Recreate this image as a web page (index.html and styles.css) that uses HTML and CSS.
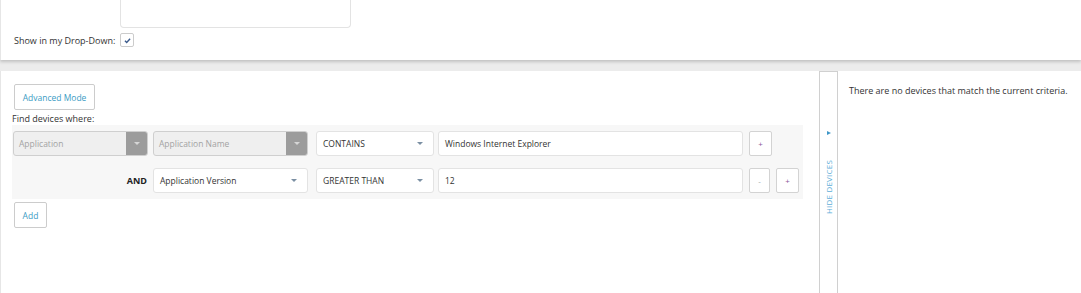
FILE: index.html
```html
<!DOCTYPE html>
<html lang="en">
<head>
    <meta charset="UTF-8">
    <title>Device Filter</title>
    <link rel="stylesheet" href="styles.css">
</head>
<body>
    <div class="top-panel">
        <div class="notes-box"></div>
        <div class="dropdown-row">
            <span class="label">Show in my Drop-Down:</span>
            <span class="checkbox">
                <svg viewBox="0 0 10 10"><path d="M2.2 5.2l1.9 1.9 3.8-4" fill="none" stroke="#3b5b8c" stroke-width="1.6"/></svg>
            </span>
        </div>
    </div>

    <div class="bottom-panel">
        <div class="criteria">
            <button class="btn btn-mode">Advanced Mode</button>
            <div class="find-label">Find devices where:</div>

            <div class="rules">
                <div class="rule">
                    <div class="select disabled col-field"><span>Application</span><i class="arrow"></i></div>
                    <div class="select disabled col-name"><span>Application Name</span><i class="arrow"></i></div>
                    <div class="select col-op"><span>CONTAINS</span><i class="caret"></i></div>
                    <div class="input col-value">Windows Internet Explorer</div>
                    <button class="mini plus">+</button>
                </div>
                <div class="rule">
                    <div class="col-field and">AND</div>
                    <div class="select col-name"><span>Application Version</span><i class="caret"></i></div>
                    <div class="select col-op"><span>GREATER THAN</span><i class="caret"></i></div>
                    <div class="input col-value">12</div>
                    <button class="mini minus">-</button>
                    <button class="mini plus">+</button>
                </div>
            </div>

            <button class="btn btn-add">Add</button>
        </div>

        <div class="toggle">
            <span class="toggle-arrow"></span>
            <span class="toggle-text">HIDE DEVICES</span>
        </div>

        <div class="results">
            There are no devices that match the current criteria.
        </div>
    </div>
</body>
</html>
```

FILE: styles.css
```css
* {
    margin: 0;
    padding: 0;
    box-sizing: border-box;
}

body {
    font-family: "Open Sans", "Liberation Sans", sans-serif;
    font-size: 9px;
    color: #333;
    background: #ececec;
    width: 1081px;
    height: 293px;
    overflow: hidden;
}

/* top panel */
.top-panel {
    background: #fff;
    height: 60px;
    border-left: 1px solid #e6e6e6;
    box-shadow: 0 2px 3px rgba(0, 0, 0, 0.18);
    padding-left: 13px;
}

.notes-box {
    margin-left: 106px;
    width: 231px;
    height: 28px;
    border: 1px solid #e3e3e3;
    border-top: none;
    border-radius: 0 0 4px 4px;
}

.dropdown-row {
    display: flex;
    align-items: center;
    margin-top: 5px;
}

.label {
    width: 106px;
    color: #333;
}

.checkbox {
    width: 14px;
    height: 14px;
    border: 1px solid #ccc;
    border-radius: 2px;
    display: flex;
    align-items: center;
    justify-content: center;
}

.checkbox svg {
    width: 9px;
    height: 9px;
}

/* bottom panel */
.bottom-panel {
    margin-top: 11px;
    background: #fff;
    height: 222px;
    border-left: 1px solid #e6e6e6;
    display: flex;
}

.criteria {
    width: 817px;
    padding: 13px 0 0 11px;
}

.btn {
    font-family: inherit;
    font-size: 8.5px;
    color: #3b9cc4;
    background: #fff;
    border: 1px solid #ccc;
    border-radius: 2px;
    height: 26px;
    cursor: pointer;
}

.btn-mode {
    margin-left: 2px;
    width: 81px;
}

.btn-add {
    margin-left: 2px;
    margin-top: 3px;
    width: 33px;
}

.find-label {
    margin-top: 3px;
    height: 12px;
    line-height: 12px;
    color: #333;
}

.rules {
    width: 791px;
    background: #f7f7f7;
    padding: 6px 0 6px 1px;
    display: flex;
    flex-direction: column;
    gap: 12px;
}

.rule {
    display: flex;
    align-items: center;
    height: 25px;
}

.col-field { width: 135px; }
.col-name { width: 155px; margin-left: 5px; }
.col-op { width: 118px; margin-left: 8px; }
.col-value { width: 305px; margin-left: 4px; }

.select,
.input {
    height: 25px;
    border: 1px solid #e3e3e3;
    border-radius: 3px;
    background: #fff;
    display: flex;
    align-items: center;
    padding-left: 6px;
    color: #333;
    font-size: 8.5px;
}

.select span {
    flex: 1;
}

.select.disabled {
    background: #efefef;
    border-color: #cfcfcf;
    color: #a3a3a3;
    padding-left: 5px;
}

.arrow {
    width: 21px;
    align-self: stretch;
    background: #9c9c9c;
    border-radius: 0 2px 2px 0;
    display: flex;
    align-items: center;
    justify-content: center;
}

.arrow::after,
.caret::after {
    content: "";
    border-left: 3px solid transparent;
    border-right: 3px solid transparent;
    border-top: 3px solid #d6d6d6;
}

.caret {
    width: 12px;
    margin-right: 7px;
    display: flex;
    justify-content: center;
}

.caret::after {
    border-top-color: #7b8fa3;
}

.and {
    text-align: right;
    font-weight: 700;
    color: #222;
    padding-right: 1px;
}

.mini {
    height: 25px;
    width: 23px;
    margin-left: 6px;
    border: 1px solid #d3d3d3;
    border-radius: 2px;
    background: #fff;
    font-family: inherit;
    font-size: 8px;
    cursor: pointer;
}

.mini.plus { color: #8a5a9c; }
.mini.minus { color: #9aa; width: 21px; }

/* side toggle */
.toggle {
    width: 19px;
    border: 1px solid #d0d0d0;
    border-bottom: none;
    display: flex;
    flex-direction: column;
    align-items: center;
    padding-top: 59px;
    margin-left: 1px;
}

.toggle-arrow {
    width: 0;
    height: 0;
    border-top: 2px solid transparent;
    border-bottom: 2px solid transparent;
    border-left: 4px solid #3f97c8;
    margin-left: 1px;
}

.toggle-text {
    margin-top: 25px;
    writing-mode: vertical-rl;
    transform: rotate(180deg);
    font-size: 8px;
    color: #5eaed8;
    letter-spacing: 0.2px;
}

.results {
    flex: 1;
    padding: 13px 0 0 11px;
    color: #333;
    font-size: 9px;
}
```
